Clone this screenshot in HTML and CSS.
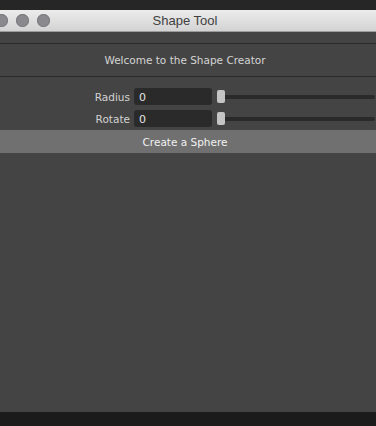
FILE: index.html
```html
<!doctype html>
<html lang="en">
<head>
    <meta charset="UTF-8">
    <link rel="stylesheet" href="styles.css">
    <title>Shape Tool</title>
</head>
<body>
<div class="desktop-top"></div>
<div class="window">
    <div class="titlebar">
        <div class="lights">
            <span class="light"></span>
            <span class="light"></span>
            <span class="light"></span>
        </div>
        <div class="title">Shape Tool</div>
    </div>

    <div class="content">
        <div class="welcome">Welcome to the Shape Creator</div>

        <div class="fields">
            <div class="field">
                <label class="label">Radius</label>
                <div class="value">0</div>
                <div class="slider">
                    <div class="track"></div>
                    <div class="handle"></div>
                </div>
            </div>
            <div class="field">
                <label class="label">Rotate</label>
                <div class="value">0</div>
                <div class="slider">
                    <div class="track"></div>
                    <div class="handle"></div>
                </div>
            </div>
        </div>

        <button class="create">Create a Sphere</button>
    </div>
</div>
<div class="desktop-bottom"></div>
</body>
</html>
```

FILE: styles.css
```css
html, body {
    margin: 0;
    padding: 0;
    width: 376px;
    height: 426px;
    overflow: hidden;
    background: #1b1b1b;
    font-family: "DejaVu Sans", "Liberation Sans", sans-serif;
}

.desktop-top {
    height: 10px;
    background: #262626;
}

.window {
    display: flex;
    flex-direction: column;
    height: 402px;
    background: #444444;
}

.titlebar {
    position: relative;
    height: 22px;
    box-sizing: border-box;
    background: linear-gradient(#ececec, #d3d3d3);
    border-bottom: 1px solid #9c9c9c;
    display: flex;
    align-items: center;
    justify-content: center;
}

.lights {
    position: absolute;
    left: -5px;
    top: 4px;
    display: flex;
    gap: 8px;
}

.light {
    width: 13px;
    height: 13px;
    border-radius: 50%;
    background: #8a8a8e;
    box-shadow: inset 0 0 0 1px #7a7a7e;
}

.title {
    font-family: "Liberation Sans", sans-serif;
    font-size: 13px;
    color: #404040;
    margin-right: 6px;
}

.content {
    flex: 1;
    padding-top: 11px;
}

.welcome {
    border-top: 1px solid #2b2b2b;
    border-bottom: 1px solid #2b2b2b;
    height: 32px;
    display: flex;
    align-items: center;
    justify-content: center;
    padding-right: 6px;
    font-size: 10.5px;
    color: #d4d4d4;
}

.fields {
    padding-top: 11px;
    display: flex;
    flex-direction: column;
    gap: 5px;
}

.field {
    display: grid;
    grid-template-columns: 130px 78px 1fr;
    column-gap: 4px;
    height: 17px;
    align-items: center;
}

.label {
    text-align: right;
    font-size: 10.5px;
    color: #d2d2d2;
}

.value {
    height: 17px;
    box-sizing: border-box;
    background: #2a2a2a;
    border-radius: 3px;
    padding: 1px 5px 0;
    font-size: 11px;
    line-height: 17px;
    color: #e2e2e2;
}

.slider {
    position: relative;
    height: 17px;
    margin-left: 1px;
    display: flex;
    align-items: center;
}

.track {
    flex: 1;
    height: 4px;
    margin-right: 1px;
    border-radius: 2px;
    background: #2a2a2a;
}

.handle {
    position: absolute;
    left: 0;
    top: 2px;
    width: 8px;
    height: 13px;
    border-radius: 2px;
    background: #c4c4c4;
}

.create {
    display: block;
    width: 100%;
    height: 23px;
    margin-top: 3px;
    border: 0;
    background: #707070;
    padding: 0 6px 0 0;
    font-family: "DejaVu Sans", sans-serif;
    font-size: 10.5px;
    color: #f2f2f2;
}
```
